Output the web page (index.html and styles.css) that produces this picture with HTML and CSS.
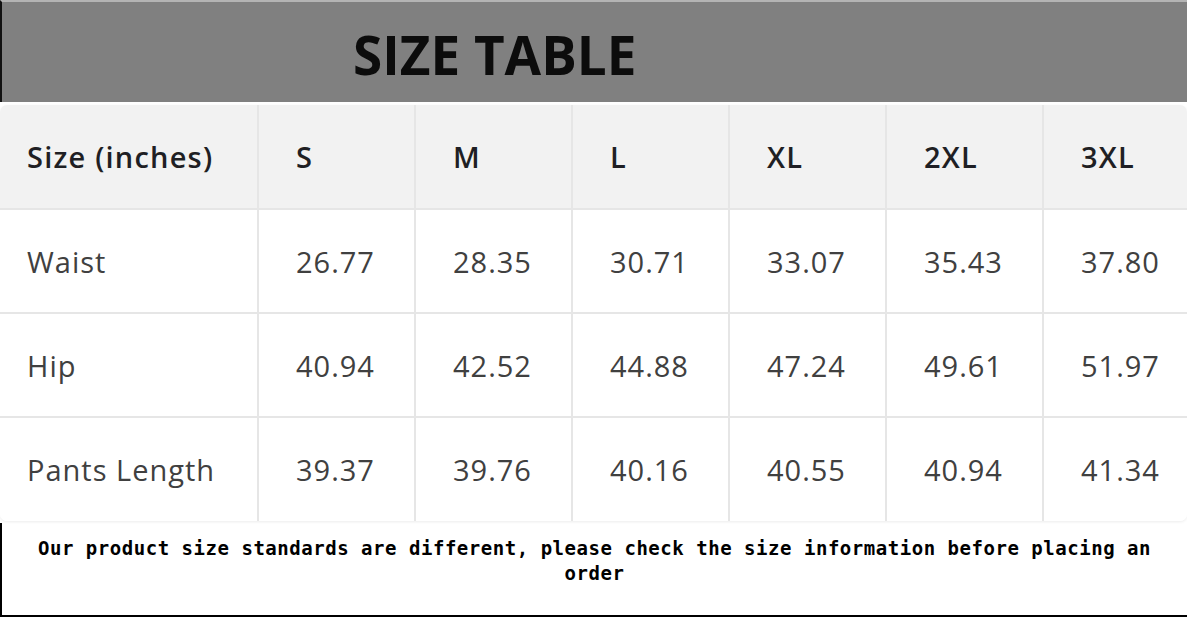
FILE: index.html
```html
<!DOCTYPE html>
<html lang="en">
<head>
<meta charset="utf-8">
<title>Size Table</title>
<link rel="stylesheet" href="styles.css">
</head>
<body>
<div class="page">
  <header class="banner">
    <h1 class="banner-title">SIZE TABLE</h1>
  </header>
  <div class="table-wrap">
    <table class="size-table">
      <colgroup>
        <col class="c-first"><col class="c-size"><col class="c-size"><col class="c-size"><col class="c-size"><col class="c-size"><col class="c-last">
      </colgroup>
      <thead>
        <tr><th class="first">Size (inches)</th><th>S</th><th>M</th><th>L</th><th>XL</th><th>2XL</th><th>3XL</th></tr>
      </thead>
      <tbody>
        <tr><td class="first">Waist</td><td>26.77</td><td>28.35</td><td>30.71</td><td>33.07</td><td>35.43</td><td>37.80</td></tr>
        <tr><td class="first">Hip</td><td>40.94</td><td>42.52</td><td>44.88</td><td>47.24</td><td>49.61</td><td>51.97</td></tr>
        <tr><td class="first">Pants Length</td><td>39.37</td><td>39.76</td><td>40.16</td><td>40.55</td><td>40.94</td><td>41.34</td></tr>
      </tbody>
    </table>
  </div>
  <div class="note">
    <p class="note-text">Our product size standards are different, please check the size information before placing an order</p>
  </div>
</div>
</body>
</html>
```

FILE: styles.css
```css
html, body {
  margin: 0;
  padding: 0;
  background: #ffffff;
}

.page {
  width: 1187px;
  height: 617px;
  overflow: hidden;
  display: flex;
  flex-direction: column;
}

.banner {
  box-sizing: border-box;
  height: 102px;
  border-top: 2px solid #b4b4b4;
  border-left: 2px solid #111111;
  background: #808080;
  padding: 26px 0 0 351px;
  flex: none;
}

.banner-title {
  margin: 0;
  font-family: "Open Sans", "Liberation Sans", sans-serif;
  font-weight: 700;
  font-size: 53px;
  line-height: 54px;
  color: #0c0c0c;
  letter-spacing: 0;
}

.table-wrap {
  margin-top: 3px;
  border-radius: 7px;
  overflow: hidden;
  box-shadow: 0 1px 3px rgba(0,0,0,0.08);
  flex: none;
}

.size-table {
  width: 1187px;
  table-layout: fixed;
  border-collapse: collapse;
  font-family: "Open Sans", "Liberation Sans", sans-serif;
}

.c-first { width: 258px; }
.c-size { width: 157px; }
.c-last { width: 144px; }

.size-table th,
.size-table td {
  height: 104px;
  box-sizing: border-box;
  padding: 0 0 0 37px;
  text-align: left;
  vertical-align: middle;
  border-right: 2px solid #e6e6e6;
  border-bottom: 2px solid #e6e6e6;
  white-space: nowrap;
}

.size-table th:last-child,
.size-table td:last-child {
  border-right: none;
}

.size-table tbody tr:last-child td {
  border-bottom: none;
}

.size-table th {
  background: #f2f2f2;
  font-weight: 600;
  font-size: 29px;
  letter-spacing: 1.2px;
  color: #1f1f24;
}

.size-table td {
  background: #ffffff;
  font-weight: 400;
  font-size: 29px;
  letter-spacing: 1px;
  color: #404040;
}

.size-table .first {
  padding-left: 27px;
}

.note {
  box-sizing: border-box;
  margin-top: 2px;
  flex: 1;
  border-left: 2px solid #000000;
  border-bottom: 2px solid #000000;
  padding: 13px 25px 0 25px;
}

.note-text {
  margin: 0;
  text-align: center;
  font-family: "DejaVu Sans Mono", "Liberation Mono", monospace;
  font-size: 19px;
  font-weight: 600;
  letter-spacing: 0.53px;
  line-height: 25px;
  color: #000000;
}
```
